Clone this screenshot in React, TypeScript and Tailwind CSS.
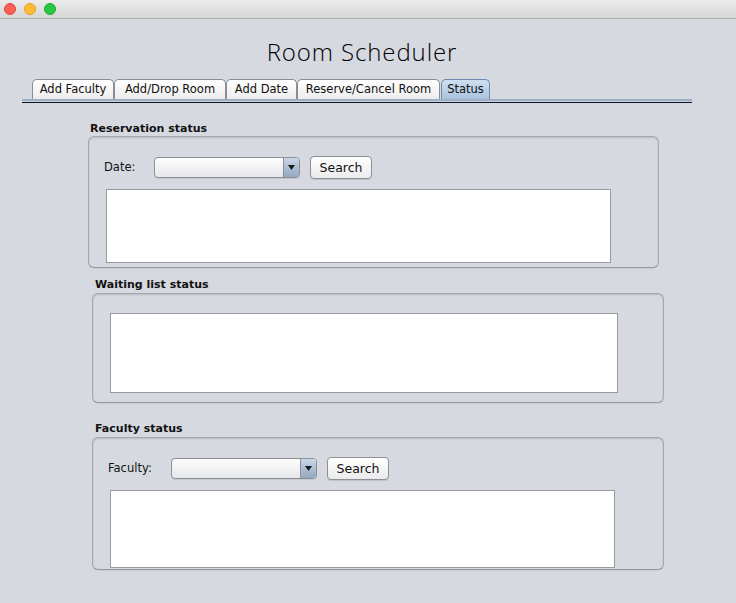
import React from "react";

const ui = "font-['DejaVu_Sans',sans-serif]";

const tabs = [
  { label: "Add Faculty", w: "w-[82px]" },
  { label: "Add/Drop Room", w: "w-[112px]" },
  { label: "Add Date", w: "w-[71px]" },
  { label: "Reserve/Cancel Room", w: "w-[143px]" },
];

function Combo({ className = "" }: { className?: string }) {
  return (
    <div
      className={`flex h-[21px] w-[146px] overflow-hidden rounded-[4px] border border-[#8d8f94] bg-gradient-to-b from-[#fdfdfd] to-[#e6e7ea] shadow-[0_1px_0_rgba(0,0,0,0.08)] ${className}`}
    >
      <div className="flex-1" />
      <div className="flex w-[16px] items-center justify-center border-l border-[#8d8f94] bg-gradient-to-b from-[#c9d6e6] to-[#93a8c2]">
        <svg width="7" height="5" viewBox="0 0 7 5">
          <path d="M0 0h7L3.5 5z" fill="#1a1a1a" />
        </svg>
      </div>
    </div>
  );
}

function SearchButton({ className = "" }: { className?: string }) {
  return (
    <button
      className={`h-[23px] w-[62px] rounded-[4px] border border-[#8d8f94] bg-gradient-to-b from-[#ffffff] to-[#ebebed] text-[12.5px] leading-[20px] text-[#111] shadow-[0_1px_0_rgba(0,0,0,0.1)] ${className}`}
    >
      Search
    </button>
  );
}

function Group({ className = "", children }: { className?: string; children: React.ReactNode }) {
  return (
    <div
      className={`rounded-[6px] border border-[#a4a7ae] border-b-[#979aa1] bg-[#d6d9e0] shadow-[inset_0_1px_2px_rgba(0,0,0,0.14),0_1px_0_rgba(0,0,0,0.06)] ${className}`}
    >
      {children}
    </div>
  );
}

function Label({ children, className = "" }: { children: React.ReactNode; className?: string }) {
  return <div className={`h-[14px] text-[11px] font-bold leading-[14px] text-[#111] ${className}`}>{children}</div>;
}

export default function App() {
  return (
    <div className={`flex h-[603px] w-[736px] flex-col overflow-hidden bg-[#d6d9e0] ${ui}`}>
      {/* title bar */}
      <div className="flex h-[19px] shrink-0 items-center gap-[8px] border-b border-[#b1b1b1] bg-gradient-to-b from-[#ebebeb] to-[#d6d6d6] pl-[4px]">
        <span className="h-[12px] w-[12px] rounded-full border border-[#e2463f] bg-[#fd5f57]" />
        <span className="h-[12px] w-[12px] rounded-full border border-[#dea033] bg-[#febc2e]" />
        <span className="h-[12px] w-[12px] rounded-full border border-[#1aab29] bg-[#28c840]" />
      </div>

      <div className="mt-[17px] pr-[12px] text-center font-['Open_Sans',sans-serif] text-[24px] font-light leading-[32px] tracking-[0.9px] text-[#000]">
        Room Scheduler
      </div>

      {/* tabs */}
      <div className="mt-[11px] flex pl-[32px]">
        {tabs.map((t) => (
          <div
            key={t.label}
            className={`${t.w} flex h-[20px] items-center justify-center rounded-t-[5px] border border-b-0 border-[#8b8d92] bg-gradient-to-b from-[#ffffff] to-[#ededed] text-[11.5px] text-[#111]`}
          >
            {t.label}
          </div>
        ))}
        <div className="ml-px flex h-[20px] w-[49px] items-center justify-center rounded-t-[5px] border border-b-0 border-[#6d89ad] bg-gradient-to-b from-[#cfdff0] to-[#a9c3df] text-[11.5px] text-[#111]">
          Status
        </div>
      </div>
      <div className="ml-[22px] w-[670px]">
        <div className="h-[2px] bg-[#9eafc5]" />
        <div className="h-px bg-[#c9d2de]" />
        <div className="h-px bg-[#0e1526]" />
      </div>

      {/* reservation status */}
      <div className="ml-[88px] mt-[18px] w-[571px]">
        <Label className="pl-[2px] pt-px">Reservation status</Label>
        <Group className="mt-px h-[132px] pl-[15px] pt-[19px]">
          <div className="flex items-center">
            <span className="w-[50px] text-[11.5px] text-[#111]">Date:</span>
            <Combo />
            <SearchButton className="ml-[10px]" />
          </div>
          <div className="ml-[2px] mt-[10px] h-[74px] w-[505px] border border-[#999ba2] bg-white" />
        </Group>
      </div>

      {/* waiting list */}
      <div className="ml-[92px] mt-[9px] w-[572px]">
        <Label className="pl-[3px] pt-px">Waiting list status</Label>
        <Group className="mt-[2px] h-[110px] pl-[17px] pt-[19px]">
          <div className="h-[80px] w-[508px] border border-[#999ba2] bg-white" />
        </Group>
      </div>

      {/* faculty status */}
      <div className="ml-[92px] mt-[18px] w-[572px]">
        <Label className="pl-[3px] pt-px">Faculty status</Label>
        <Group className="mt-[2px] h-[133px] pl-[15px] pt-[19px]">
          <div className="flex items-center">
            <span className="w-[63px] text-[11.5px] text-[#111]">Faculty:</span>
            <Combo />
            <SearchButton className="ml-[10px]" />
          </div>
          <div className="ml-[2px] mt-[10px] h-[78px] w-[505px] border border-[#999ba2] bg-white" />
        </Group>
      </div>
    </div>
  );
}
